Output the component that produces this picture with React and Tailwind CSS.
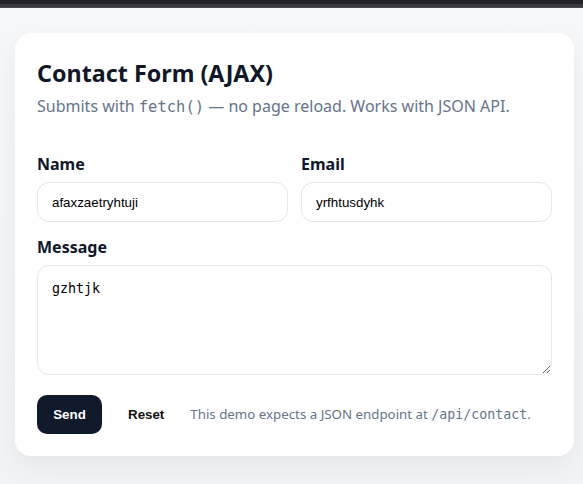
import { useState } from 'react';

export default function App() {
  const [name, setName] = useState('afaxzaetryhtuji');
  const [email, setEmail] = useState('yrfhtusdyhk');
  const [message, setMessage] = useState('gzhtjk');

  const reset = () => {
    setName('');
    setEmail('');
    setMessage('');
  };

  return (
    <div className="min-h-[484px] bg-gradient-to-b from-[#f7f8fa] to-[#f2f3f6] font-['Noto_Sans',sans-serif]">
      <div className="h-[4px] bg-[#222228]" />
      <div className="h-[4px] border-b border-[#4a4a50] bg-[#38383e]" />

      <div className="px-[15px] pt-[25px] pb-7">
        <form
          className="w-[559px] rounded-[16px] bg-white px-[22px] pt-[25px] pb-[22px] shadow-[0_10px_30px_rgba(15,23,42,0.06)]"
          onSubmit={(e) => e.preventDefault()}
        >
          <h1 className="text-[23.3px] leading-[30px] font-bold text-[#0f172a]">Contact Form (AJAX)</h1>
          <p className="mt-[6px] text-[16px] leading-[24px] text-[#64748b]">
            Submits with <code className="font-['DejaVu_Sans_Mono',monospace] text-[15.5px]">fetch()</code> — no page reload. Works with JSON API.
          </p>

          <div className="mt-[34px] grid grid-cols-2 gap-x-[13px]">
            <label className="flex flex-col">
              <span className="text-[16px] leading-[22px] font-bold text-[#0f172a]">Name</span>
              <input
                value={name}
                onChange={(e) => setName(e.target.value)}
                className="mt-[7px] h-[40px] rounded-[12px] border border-[#e2e8f0] px-[14px] font-['Liberation_Sans',Arial,sans-serif] text-[13.33px] text-black outline-none"
              />
            </label>
            <label className="flex flex-col">
              <span className="text-[16px] leading-[22px] font-bold text-[#0f172a]">Email</span>
              <input
                value={email}
                onChange={(e) => setEmail(e.target.value)}
                className="mt-[7px] h-[40px] rounded-[12px] border border-[#e2e8f0] px-[14px] font-['Liberation_Sans',Arial,sans-serif] text-[13.33px] text-black outline-none"
              />
            </label>
          </div>

          <label className="mt-[14px] flex flex-col">
            <span className="text-[16px] leading-[22px] font-bold text-[#0f172a]">Message</span>
            <textarea
              value={message}
              onChange={(e) => setMessage(e.target.value)}
              spellCheck
              className="mt-[7px] h-[110px] rounded-[12px] border border-[#e2e8f0] px-[14px] pt-[15px] pb-[12px] font-['DejaVu_Sans_Mono',monospace] text-[13.33px] leading-[16px] text-black outline-none"
            />
          </label>

          <div className="mt-[20px] flex items-center">
            <button
              type="submit"
              className="h-[39px] w-[65px] rounded-[10px] bg-[#111a2b] font-['Liberation_Sans',Arial,sans-serif] text-[13.33px] font-bold text-white"
            >
              Send
            </button>
            <button
              type="button"
              onClick={reset}
              className="ml-[26px] font-['Liberation_Sans',Arial,sans-serif] text-[13.33px] font-bold text-[#111]"
            >
              Reset
            </button>
            <p className="ml-[26px] text-[13.3px] text-[#64748b]">
              This demo expects a JSON endpoint at <code className="font-['DejaVu_Sans_Mono',monospace] text-[13.3px]">/api/contact</code>.
            </p>
          </div>
        </form>
      </div>
    </div>
  );
}
